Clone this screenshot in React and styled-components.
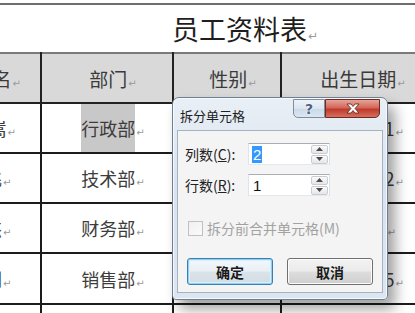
import React from 'react'
import styled, { createGlobalStyle } from 'styled-components'

const Global = createGlobalStyle`
  html, body { margin: 0; padding: 0; background: #fff; }
  body {
    width: 415px;
    height: 313px;
    overflow: hidden;
    font-family: "Noto Sans CJK SC", "Noto Sans", sans-serif;
  }
`

const Page = styled.div`
  position: relative;
  width: 415px;
  height: 313px;
  overflow: hidden;
  background: #fff;
`

const TopRule = styled.div`
  margin-top: 3px;
  height: 2px;
  background: #6e6e6e;
`

const Title = styled.h1`
  margin: 0;
  height: 47px;
  padding: 1px 0 0 172px;
  box-sizing: border-box;
  font-size: 27px;
  font-weight: 400;
  line-height: 46px;
  color: #1e1e1e;
  white-space: nowrap;
`

const Mark = styled.span`
  font-family: "DejaVu Sans", sans-serif;
  font-size: ${p => (p.$big ? 12 : 10)}px;
  color: #9a9a9a;
  margin-left: 1px;
`

const Sheet = styled.table`
  margin-left: -36px;
  border-collapse: collapse;
  table-layout: fixed;
  width: 468px;
`

const Head = styled.th`
  height: 48px;
  padding: 0 ${p => p.$pr ?? 0}px 0 ${p => p.$pl ?? 12}px;
  background: #d9d9d9;
  border: 2px solid #222;
  border-top: 2px solid #7a7a7a;
  font-size: 19px;
  font-weight: 400;
  color: #3a3a3a;
  text-align: ${p => (p.$right ? 'right' : 'center')};
  white-space: nowrap;
  overflow: hidden;
`

const Row = styled.tr`
  height: ${p => p.$h}px;
`

const Cell = styled.td`
  padding: 0 ${p => p.$pr ?? 0}px 0 ${p => p.$pl ?? 12}px;
  border: 2px solid #1c1c1c;
  font-size: 18px;
  color: #3c3c3c;
  text-align: ${p => (p.$right ? 'right' : 'center')};
  white-space: nowrap;
  overflow: hidden;
`

const Picked = styled.span`
  display: inline-block;
  line-height: 48px;
  background: ${p => (p.$on ? '#c8c8c8' : 'transparent')};
`

/* ---------- dialog ---------- */

const Dialog = styled.div`
  position: absolute;
  left: 172px;
  top: 97px;
  width: 216px;
  height: 203px;
  box-sizing: border-box;
  display: flex;
  flex-direction: column;
  padding: 0 4px 6px 4px;
  border: 1px solid #6f7f93;
  border-radius: 7px 7px 4px 4px;
  background: linear-gradient(180deg, #e9eff6 0%, #d8e3ef 45%, #dde6f0 100%);
  box-shadow: 7px 9px 14px rgba(0, 0, 0, 0.38), inset 0 0 0 1px rgba(255, 255, 255, 0.7);
`

const TitleBar = styled.div`
  height: 32px;
  display: flex;
  align-items: flex-start;
`

const Caption = styled.span`
  padding: 8px 0 0 3px;
  font-size: 13px;
  color: #1e1e1e;
`

const Caps = styled.div`
  margin-left: auto;
  margin-right: 3px;
  margin-top: 1px;
  display: flex;
`

const CapButton = styled.div`
  height: 19px;
  width: ${p => (p.$close ? 55 : 32)}px;
  box-sizing: border-box;
  display: flex;
  align-items: center;
  justify-content: center;
  border: 1px solid ${p => (p.$close ? '#6e2a22' : '#7e8ea2')};
  border-radius: ${p => (p.$close ? '0 0 5px 0' : '0 0 0 5px')};
  background: ${p =>
    p.$close
      ? 'linear-gradient(180deg, #e6a598 0%, #d2675a 45%, #c0392c 55%, #d4705f 100%)'
      : 'linear-gradient(180deg, #eef3f9 0%, #dbe5f0 50%, #ccd9e7 55%, #dce6f1 100%)'};
  font-family: "DejaVu Sans", sans-serif;
  font-size: 14px;
  font-weight: 700;
  color: #4a6282;
  text-shadow: 0 0 2px #fff, 0 0 1px #fff;
`

const Client = styled.div`
  flex: 1;
  box-sizing: border-box;
  padding: 12px 0 0 7px;
  border: 1px solid #a4b2c2;
  background: #f4f4f4;
  display: flex;
  flex-direction: column;
`

const Field = styled.div`
  display: flex;
  align-items: center;
  height: 22px;
  margin-bottom: 9px;
`

const Label = styled.span`
  width: 63px;
  font-size: 14px;
  color: #222;
  white-space: nowrap;
  u { text-decoration: underline; }
`

const SpinBox = styled.div`
  width: 82px;
  height: 22px;
  box-sizing: border-box;
  display: flex;
  align-items: center;
  padding: 0 1px 0 3px;
  border: 1px solid #abadb3;
  border-color: #abadb3 #dbdfe6 #e3e9ef #e2e3ea;
  background: #fff;
  font-family: "Liberation Sans", sans-serif;
  font-size: 15px;
  color: #111;
`

const Value = styled.span`
  padding: 0 1px;
  line-height: 17px;
  background: ${p => (p.$sel ? '#3399ff' : 'transparent')};
  color: ${p => (p.$sel ? '#fff' : '#111')};
`

const Arrows = styled.div`
  margin-left: auto;
  display: flex;
  flex-direction: column;
  gap: 1px;
`

const Arrow = styled.div`
  width: 17px;
  height: 9px;
  box-sizing: border-box;
  display: flex;
  align-items: center;
  justify-content: center;
  border: 1px solid #c9cdd3;
  border-radius: 2px;
  background: linear-gradient(180deg, #fbfbfb, #e6e6e6);
`

const Check = styled.label`
  display: flex;
  align-items: center;
  gap: 4px;
  margin: 13px 0 0 3px;
  font-size: 14px;
  color: #a2a2a2;
  white-space: nowrap;
`

const Box = styled.span`
  width: 13px;
  height: 13px;
  border: 1px solid #c0c0c0;
  background: linear-gradient(135deg, #f0f0f0, #fafafa);
`

const Actions = styled.div`
  display: flex;
  gap: 14px;
  margin: 20px 0 0 2px;
`

const Btn = styled.button`
  width: 86px;
  height: 27px;
  box-sizing: border-box;
  padding: 0;
  border: 1px solid ${p => (p.$def ? '#3c7fb1' : '#707070')};
  border-radius: 3px;
  background: ${p =>
    p.$def
      ? 'linear-gradient(180deg, #f4f8fb 0%, #e9eff4 48%, #dbe3ea 52%, #d3dce4 100%)'
      : 'linear-gradient(180deg, #f2f2f2 0%, #ebebeb 48%, #dddddd 52%, #cfcfcf 100%)'};
  box-shadow: ${p => (p.$def ? 'inset 0 0 0 1px #8fd0f3, inset 0 0 0 2px #d8f0fc' : 'inset 0 0 0 1px #fcfcfc')};
  font-family: "Noto Sans CJK SC", sans-serif;
  font-size: 14px;
  font-weight: 700;
  color: #1a1a1a;
`

const Tri = ({ up }) => (
  <svg width="7" height="4" viewBox="0 0 7 4">
    <path d={up ? 'M0 4 L3.5 0 L7 4 Z' : 'M0 0 L3.5 4 L7 0 Z'} fill="#4d4d4d" />
  </svg>
)

const Spinner = ({ value, sel }) => (
  <SpinBox>
    <Value $sel={sel}>{value}</Value>
    <Arrows>
      <Arrow><Tri up /></Arrow>
      <Arrow><Tri /></Arrow>
    </Arrows>
  </SpinBox>
)

const P = () => <Mark>↵</Mark>

const rows = [
  { name: '王嵩', pr: 24, dept: '行政部', sex: '女', born: '1986-9-1', h: 50, on: true },
  { name: '李飞', pr: 34, dept: '技术部', sex: '男', born: '1988-3-2', h: 48 },
  { name: '陈杰', pr: 34, dept: '财务部', sex: '男', born: '1990-1', h: 49 },
  { name: '周刚', pr: 30, dept: '销售部', sex: '男', born: '1985-6-5', h: 51 },
]

export default function App() {
  return (
    <Page>
      <Global />
      <TopRule />
      <Title>员工资料表<Mark $big>↵</Mark></Title>
      <Sheet>
        <colgroup>
          <col style={{ width: 76 }} />
          <col style={{ width: 132 }} />
          <col style={{ width: 108 }} />
          <col style={{ width: 152 }} />
        </colgroup>
        <thead>
          <tr>
            <Head $right $pl={0} $pr={19}>姓名<P /></Head>
            <Head>部门<P /></Head>
            <Head>性别<P /></Head>
            <Head>出生日期<P /></Head>
          </tr>
        </thead>
        <tbody>
          {rows.map(r => (
            <Row key={r.dept} $h={r.h}>
              <Cell $right $pl={0} $pr={r.pr}>{r.name}<P /></Cell>
              <Cell><Picked $on={r.on}>{r.dept}</Picked><P /></Cell>
              <Cell>{r.sex}<P /></Cell>
              <Cell>{r.born}<P /></Cell>
            </Row>
          ))}
          <Row $h={49}>
            <Cell $right $pl={0} $pr={30}><P /></Cell>
            <Cell><P /></Cell>
            <Cell><P /></Cell>
            <Cell><P /></Cell>
          </Row>
        </tbody>
      </Sheet>

      <Dialog>
        <TitleBar>
          <Caption>拆分单元格</Caption>
          <Caps>
            <CapButton>?</CapButton>
            <CapButton $close>
              <svg width="14" height="11" viewBox="0 0 14 11">
                <path
                  d="M1 1 H5 L7 3.5 L9 1 H13 L9 5.5 L13 10 H9 L7 7.5 L5 10 H1 L5 5.5 Z"
                  fill="#fff"
                  stroke="#5b2019"
                  strokeWidth="0.8"
                />
              </svg>
            </CapButton>
          </Caps>
        </TitleBar>
        <Client>
          <Field>
            <Label>列数(<u>C</u>):</Label>
            <Spinner value="2" sel />
          </Field>
          <Field>
            <Label>行数(<u>R</u>):</Label>
            <Spinner value="1" />
          </Field>
          <Check>
            <Box />
            拆分前合并单元格(M)
          </Check>
          <Actions>
            <Btn $def>确定</Btn>
            <Btn>取消</Btn>
          </Actions>
        </Client>
      </Dialog>
    </Page>
  )
}
